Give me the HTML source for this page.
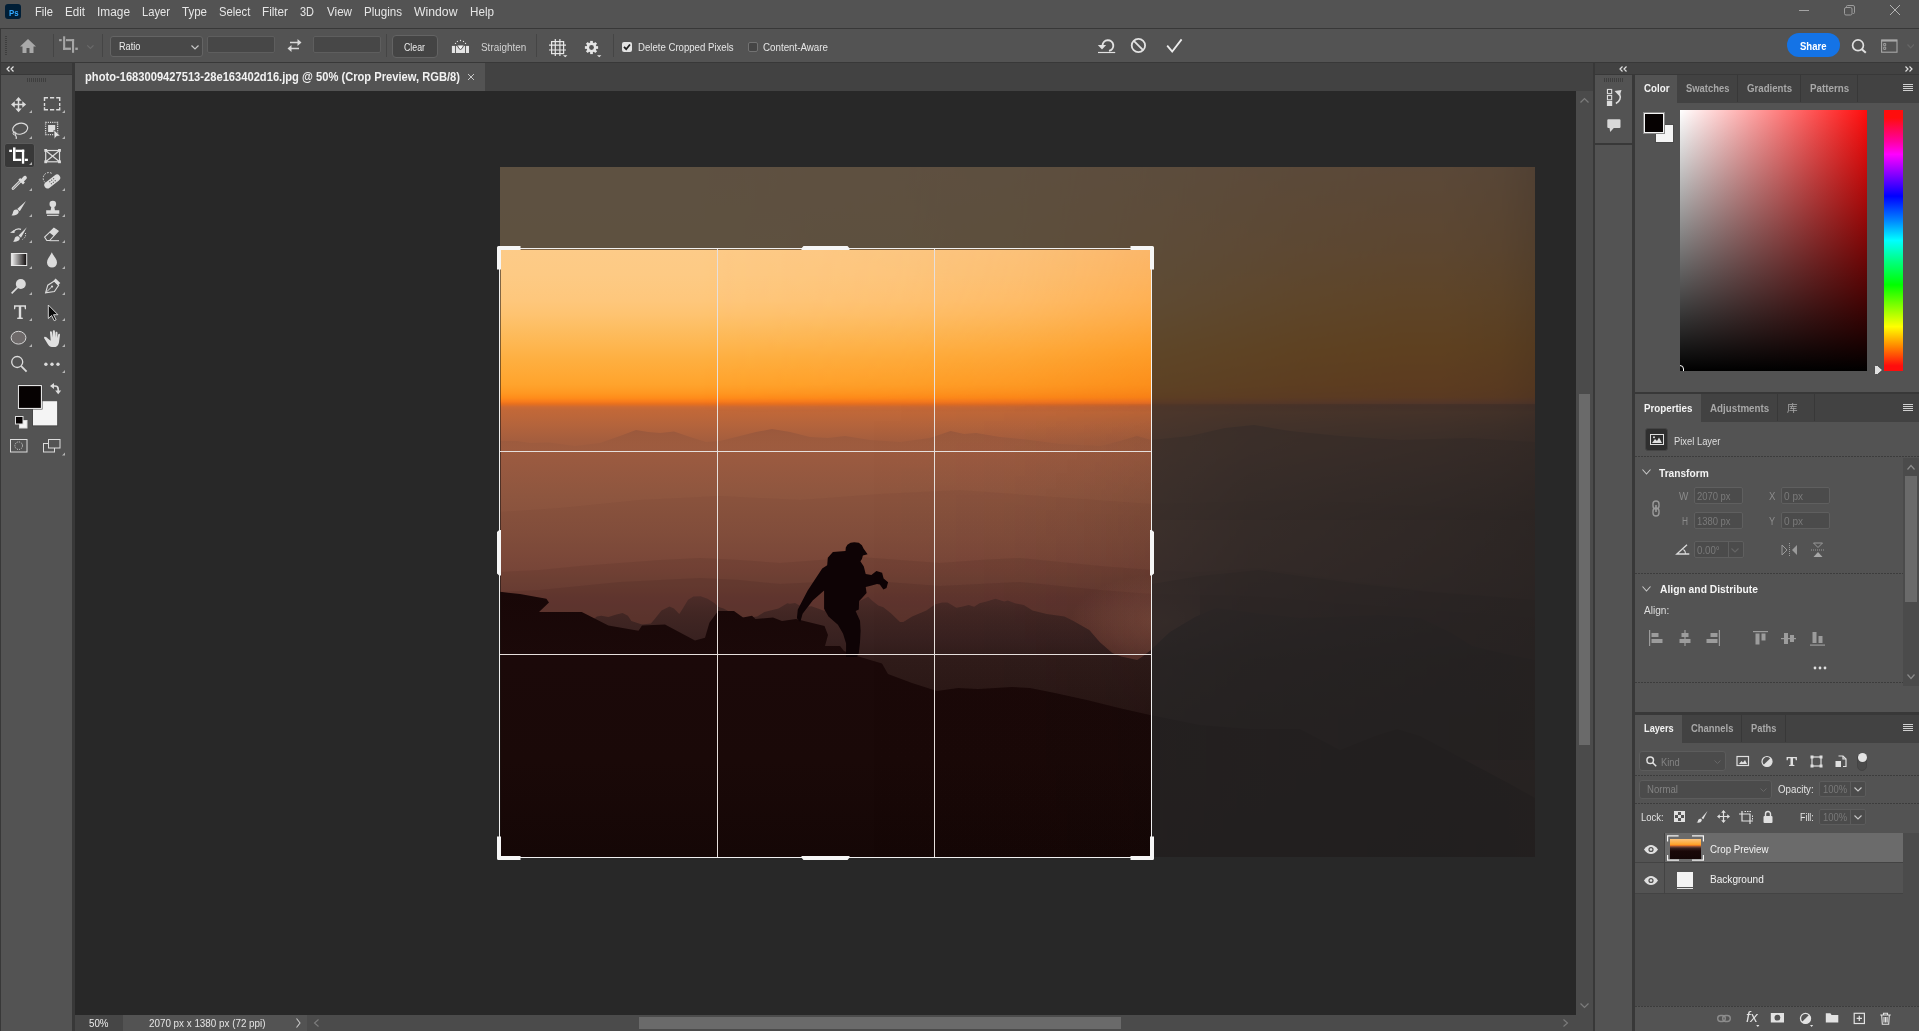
<!DOCTYPE html>
<html lang="en">
<head>
<meta charset="utf-8">
<title>photo-1683009427513-28e163402d16.jpg @ 50% (Crop Preview, RGB/8)</title>
<style>
*{box-sizing:border-box;margin:0;padding:0}
html,body{width:1919px;height:1031px;overflow:hidden;background:#383838}
body{position:relative;font-family:"Liberation Sans","Noto Sans CJK SC",sans-serif;font-size:10px;color:#dcdcdc}
.a{position:absolute}
.bg{background:#535353}
.dk{background:#424242}
.t{position:absolute;white-space:nowrap;line-height:14px;height:14px;transform-origin:0 50%}
.b{font-weight:bold}
.sep{position:absolute;width:1px;background:#454545}
.inp{position:absolute;background:#464646;border:1px solid #646464;border-radius:2px}
.dot{position:absolute;height:1px;background:repeating-linear-gradient(90deg,#3c3c3c 0 2px,#535353 2px 3px)}
svg{position:absolute;overflow:visible}
</style>
</head>
<body>
<!-- ===== Menu bar ===== -->
<div class="a bg menu" style="left:0;top:0;width:1919px;height:28px">
  <div class="a" style="left:5px;top:4px;width:16px;height:15px;background:#001e36;border-radius:3px"></div>
  <div class="t" style="left:8.5px;top:5.61px;font-size:9.5px;color:#31a8ff;font-weight:bold;transform:scaleX(0.8258)">Ps</div>
  <div class="t" style="left:35px;top:4.84px;font-size:12px;color:#e6e6e6;transform:scaleX(0.9305)">File</div>
  <div class="t" style="left:65px;top:4.84px;font-size:12px;color:#e6e6e6;transform:scaleX(0.9668)">Edit</div>
  <div class="t" style="left:97px;top:4.84px;font-size:12px;color:#e6e6e6;transform:scaleX(0.9892)">Image</div>
  <div class="t" style="left:142px;top:4.84px;font-size:12px;color:#e6e6e6;transform:scaleX(0.9324)">Layer</div>
  <div class="t" style="left:182px;top:4.84px;font-size:12px;color:#e6e6e6;transform:scaleX(0.9610)">Type</div>
  <div class="t" style="left:218.7px;top:4.84px;font-size:12px;color:#e6e6e6;transform:scaleX(0.9383)">Select</div>
  <div class="t" style="left:262px;top:4.84px;font-size:12px;color:#e6e6e6;transform:scaleX(0.9748)">Filter</div>
  <div class="t" style="left:300px;top:4.84px;font-size:12px;color:#e6e6e6;transform:scaleX(0.9124)">3D</div>
  <div class="t" style="left:327px;top:4.84px;font-size:12px;color:#e6e6e6;transform:scaleX(0.9691)">View</div>
  <div class="t" style="left:364px;top:4.84px;font-size:12px;color:#e6e6e6;transform:scaleX(0.9655)">Plugins</div>
  <div class="t" style="left:414px;top:4.84px;font-size:12px;color:#e6e6e6;transform:scaleX(1.0190)">Window</div>
  <div class="t" style="left:470px;top:4.84px;font-size:12px;color:#e6e6e6;transform:scaleX(0.9722)">Help</div>
  <!-- window controls -->
  <svg style="left:1798px;top:0" width="112" height="20" viewBox="1798 0 112 20" fill="none" stroke="#a4a4a4" stroke-width="1">
    <path d="M1799 10.500h10"/>
    <rect x="1844.500" y="7.500" width="7.500" height="7.500" rx="1.500" stroke="#9c9c9c"/><path d="M1846.500 7.300v-.8a1 1 0 0 1 1-1h5.500a1.500 1.500 0 0 1 1.500 1.500v5.500a1 1 0 0 1-1 1h-.8" stroke="#9c9c9c"/>
    <path d="M1890 5l10 10M1900 5l-10 10" stroke="#b4b4b4"/>
  </svg>
</div>
<!-- ===== Options bar ===== -->
<div class="a bg" style="left:1px;top:29px;width:1918px;height:33px"></div>
<div class="a" style="left:5px;top:36px;width:2px;height:19px;background:repeating-linear-gradient(180deg,#3e3e3e 0 1px,#535353 1px 2px)"></div>
<!-- home -->
<svg style="left:20px;top:39px" width="16" height="14" viewBox="0 0 16 14"><path d="M8 0L0 7.500h2.500V14h4V9h3v5h4V7.500H16z" fill="#a9a9a9"/></svg>
<div class="sep" style="left:53px;top:34px;height:23px"></div>
<!-- crop tool icon -->
<svg style="left:59px;top:36px" width="20" height="18" viewBox="59 36 20 18" fill="#a6a6a6"><rect x="63.100" y="36.300" width="2.100" height="13.600"/><rect x="63.100" y="47.600" width="7.800" height="2.300"/><rect x="75.300" y="47.600" width="2.500" height="2.300"/><rect x="59.100" y="39.100" width="2.600" height="2.100"/><rect x="66" y="39.100" width="8.100" height="2.100"/><rect x="72" y="39.100" width="2.100" height="13.700"/></svg>
<svg style="left:87px;top:45px" width="8" height="5" viewBox="0 0 8 5" fill="none" stroke="#6a6a6a" stroke-width="1.200"><path d="M.3.300l3.100 3.200L6.500.3"/></svg>
<div class="sep" style="left:102px;top:34px;height:23px"></div>
<!-- Ratio dropdown -->
<div class="inp" style="left:110px;top:36px;width:93px;height:21px;border-radius:3px;background:#484848"></div>
<div class="t" style="left:119px;top:40.43px;font-size:10px;color:#ececec;transform:scaleX(0.9097)">Ratio</div>
<svg style="left:191px;top:45px" width="8" height="5" viewBox="0 0 8 5" fill="none" stroke="#c8c8c8" stroke-width="1.200"><path d="M.5.5l3.500 3.500L7.500.5"/></svg>
<div class="inp" style="left:207px;top:36px;width:68px;height:17px;background:#474747;border-color:#5e5e5e"></div>
<!-- swap -->
<svg style="left:287px;top:39px" width="15" height="13" viewBox="0 0 15 13" fill="#d8d8d8"><path d="M3 2.700h7.500V0L14.500 3.500 10.500 7V4.300H3zM12 8.700H4.500V6L.5 9.500 4.500 13v-2.700H12z"/></svg>
<div class="inp" style="left:313px;top:36px;width:68px;height:17px;background:#474747;border-color:#5e5e5e"></div>
<div class="sep" style="left:386px;top:34px;height:23px"></div>
<!-- Clear -->
<div class="inp" style="left:392px;top:35px;width:46px;height:23px;border-radius:4px;background:#444444;border-color:#636363"></div>
<div class="t" style="left:403.75px;top:41.04px;font-size:10px;color:#ececec;transform:scaleX(0.8784)">Clear</div>
<!-- straighten -->
<svg style="left:451px;top:40px" width="19" height="14" viewBox="0 0 19 14" fill="#e4e4e4"><rect x=".9" y="5.900" width="3.100" height="7.100"/><rect x="14.900" y="5.900" width="3.100" height="7.100"/><rect x="4.900" y="5.900" width="9.100" height="7.100"/><path d="M6.300 5.500Q9.500 13.500 12.700 5.500" fill="#f4f4f4" stroke="#535353" stroke-width="1"/><circle cx="4.500" cy="3.400" r=".65"/><circle cx="6.400" cy="1.400" r=".65"/><circle cx="9.500" cy=".5" r=".65"/><circle cx="12.500" cy="1.400" r=".65"/><circle cx="14.500" cy="3.400" r=".65"/></svg>
<div class="t" style="left:481px;top:41.04px;font-size:10px;color:#d2d2d2;transform:scaleX(0.9925)">Straighten</div>
<div class="sep" style="left:536px;top:34px;height:23px"></div>
<!-- grid -->
<svg style="left:549px;top:39px" width="19" height="19" viewBox="549 39 19 19" fill="none" stroke="#e6e6e6" stroke-width="1.200"><rect x="551.600" y="41.600" width="12" height="12"/><path d="M555.300 39v17M559.900 39v17M549 45.200h17M549 50h17"/><path d="M563 55.200h4.400l-2.200 2z" fill="#e6e6e6" stroke="none"/></svg>
<!-- gear -->
<svg style="left:584px;top:40px" width="18" height="18" viewBox="584 40 18 18"><g transform="translate(591.500 47.500)" fill="#e4e4e4"><circle r="4.900"/><rect x="-1.350" y="-6.600" width="2.700" height="13.200"/><rect x="-1.350" y="-6.600" width="2.700" height="13.200" transform="rotate(45)"/><rect x="-1.350" y="-6.600" width="2.700" height="13.200" transform="rotate(90)"/><rect x="-1.350" y="-6.600" width="2.700" height="13.200" transform="rotate(135)"/><circle r="2.400" fill="#535353"/></g><path d="M597 55.200h4.400l-2.200 2z" fill="#e4e4e4"/></svg>
<div class="sep" style="left:613px;top:34px;height:23px"></div>
<!-- checkboxes -->
<div class="a" style="left:622px;top:42px;width:10px;height:10px;border-radius:2px;background:#e2e2e2"></div>
<svg style="left:623px;top:43px" width="8" height="8" viewBox="0 0 8 8" fill="none" stroke="#1e1e1e" stroke-width="1.800"><path d="M1 3.800l2.200 2.400L7 1.500"/></svg>
<div class="t" style="left:637.5px;top:41.04px;font-size:10px;color:#e6e6e6;transform:scaleX(0.9608)">Delete Cropped Pixels</div>
<div class="a" style="left:748px;top:42px;width:10px;height:10px;border-radius:2px;background:#454545;border:1px solid #727272"></div>
<div class="t" style="left:763.1px;top:41.04px;font-size:10px;color:#e6e6e6;transform:scaleX(0.9770)">Content-Aware</div>
<!-- reset / cancel / commit -->
<svg style="left:1097px;top:38px" width="19" height="16" viewBox="1097 38 19 16" fill="none" stroke="#e2e2e2"><path d="M1098 52.500h17.200" stroke-width="1.200"/><path d="M1102.500 45.500a5.400 5.400 0 1 1 6.500 5.400" stroke-width="1.900"/><path d="M1097.800 45h8.400l-4.200 4.600z" fill="#e2e2e2" stroke="none"/></svg>
<svg style="left:1130px;top:37px" width="17" height="17" viewBox="1130 37 17 17" fill="none" stroke="#e2e2e2" stroke-width="1.800"><circle cx="1138.400" cy="45.500" r="6.700"/><path d="M1133.800 40.800l9.300 9.400"/></svg>
<svg style="left:1166px;top:38px" width="18" height="15" viewBox="1166 38 18 15" fill="none" stroke="#ececec" stroke-width="1.800"><path d="M1167.200 45.600l5 6L1181.600 39.400"/></svg>
<!-- Share -->
<div class="a" style="left:1787px;top:33px;width:53px;height:24px;border-radius:12px;background:#1473e6"></div>
<div class="t" style="left:1799.9px;top:39.54px;font-size:10px;color:#ffffff;font-weight:bold;transform:scaleX(0.9533)">Share</div>
<svg style="left:1851px;top:38px" width="16" height="16" viewBox="1851 38 16 16" fill="none" stroke="#e0e0e0" stroke-width="1.700"><circle cx="1858" cy="45.300" r="5.400"/><path d="M1861.800 49.200l4 3.600" stroke-width="2"/></svg>
<svg style="left:1881px;top:39px" width="17" height="14" viewBox="0 0 17 14" fill="none" stroke="#a8a8a8" stroke-width="1.100"><rect x=".6" y="1" width="15.400" height="12.200"/><path d="M.6 1.700h15.400" stroke-width="1.800"/><path d="M2.700 4.500h2v2.200h-2zM2.700 8.200h2v2.200h-2z" stroke-width=".9"/></svg>
<svg style="left:1907px;top:44px" width="8" height="5" viewBox="0 0 8 5" fill="none" stroke="#666" stroke-width="1.200"><path d="M.5.5l3.200 3.300L6.900.5"/></svg>
<!-- ===== Toolbar ===== -->
<div class="a dk" style="left:1px;top:63px;width:71px;height:11px"></div>
<svg style="left:6px;top:66px" width="8" height="6" viewBox="0 0 8 6" fill="none" stroke="#e6e6e6" stroke-width="1.200"><path d="M3.500.5L1 3l2.500 2.500M7.500.5L5 3l2.500 2.500"/></svg>
<div class="a bg" style="left:1px;top:75px;width:71px;height:956px"></div>
<div class="a" style="left:27px;top:78px;width:20px;height:4px;background:repeating-linear-gradient(90deg,#3e3e3e 0 1px,#535353 1px 2px)"></div>
<!-- selected tool bg -->
<div class="a" style="left:4px;top:143px;width:31px;height:25px;background:#383838;border:1px solid #5a5a5a;border-radius:3px"></div>
<svg style="left:0;top:90px" width="73" height="370" viewBox="0 90 73 370" fill="none" stroke="#dcdcdc" stroke-width="1.300">
  <!-- corner flyout triangles -->
  <g fill="#b4b4b4" stroke="none">
    <path d="M32 110v3h-3zM65 110v3h-3zM32 136v3h-3zM65 136v3h-3zM32 162v3h-3zM32 188v3h-3zM65 188v3h-3zM32 214v3h-3zM65 214v3h-3zM32 240v3h-3zM65 240v3h-3zM32 266v3h-3zM65 266v3h-3zM32 292v3h-3zM65 292v3h-3zM32 318v3h-3zM65 318v3h-3zM32 344v3h-3zM65 344v3h-3zM65 370v3h-3zM65 452.500v3h-3z"/>
  </g>
  <!-- move -->
  <path d="M18.500 99v11M13 104.500h11" stroke-width="1.500"/>
  <path d="M18.500 97l3.200 3.800h-6.400zM18.500 112.200l3.200-3.800h-6.400zM11 104.500l3.800-3.200v6.400zM26.100 104.500l-3.800-3.200v6.400z" fill="#dcdcdc" stroke="none"/>
  <!-- marquee -->
  <path d="M44.500 101v-3.200h3.500M50 97.800h4.200M56.200 97.800h3.500v3.200M59.700 103v3M59.700 107.200v2.500h-3.500M54.200 109.700h-4.200M48 109.700h-3.500v-2.500M44.500 106v-3" stroke-width="1.400"/>
  <!-- lasso -->
  <ellipse cx="20.200" cy="128.700" rx="7.600" ry="5.400" transform="rotate(-12 20.200 128.700)" stroke-width="1.200"/>
  <circle cx="14.600" cy="133.400" r="1.500" stroke-width="1"/><path d="M15.300 134.800c1 1.200 1.200 2.600.9 4.200" stroke-width="1.100"/>
  <!-- object select -->
  <rect x="45.600" y="122.400" width="12" height="12.200" stroke-dasharray="1.100 1.100" stroke-width="1.300"/>
  <path d="M48.100 125h7.100v5.500h-1.500v1.400h-5.600z" fill="#dcdcdc" stroke="none"/>
  <path d="M54 130l.3 9 2.200-2.700 3.600-.6z" fill="#e4e4e4" stroke="#535353" stroke-width=".5"/>
  <!-- crop (selected) -->
  <g fill="#ffffff" stroke="none"><rect x="13" y="147.400" width="2.500" height="13.600"/><rect x="13" y="158.700" width="8.300" height="2.300"/><rect x="24.800" y="158.700" width="3.100" height="2.300"/><rect x="9.200" y="149.700" width="2.800" height="2.300"/><rect x="15.500" y="149.700" width="8.700" height="2.300"/><rect x="21.900" y="149.700" width="2.300" height="14"/></g>
  <!-- frame -->
  <g stroke-width="1.200"><rect x="45.700" y="150.500" width="13.800" height="11.300"/><path d="M45.700 150.500l13.800 11.300M59.500 150.500l-13.800 11.300"/></g>
  <g fill="#dcdcdc" stroke="none"><rect x="44.300" y="149" width="2.800" height="2.800"/><rect x="58.100" y="149" width="2.800" height="2.800"/><rect x="44.300" y="160.400" width="2.800" height="2.800"/><rect x="58.100" y="160.400" width="2.800" height="2.800"/></g>
  <!-- eyedropper -->
  <path d="M20.200 180.200l-7.800 7.800c-.8.800.4 2 1.200 1.200l7.800-7.800" stroke-width="1.100"/>
  <path d="M18.300 179.800l1.900-1.900 1 1 2.300-2.500c1.800-1.900 4.600.9 2.800 2.700l-2.400 2.400 1 1-1.900 1.900z" fill="#dcdcdc" stroke="none"/>
  <!-- healing -->
  <g transform="rotate(-38 52.200 181.400)"><rect x="43" y="178.200" width="18.400" height="6.600" rx="3.300" fill="#dcdcdc" stroke="none"/><g fill="#535353" stroke="none"><rect x="49.600" y="179.600" width="1.100" height="1.100"/><rect x="52" y="179.600" width="1.100" height="1.100"/><rect x="54.400" y="179.600" width="1.100" height="1.100"/><rect x="49.600" y="182.200" width="1.100" height="1.100"/><rect x="52" y="182.200" width="1.100" height="1.100"/><rect x="54.400" y="182.200" width="1.100" height="1.100"/></g></g>
  <path d="M45.200 182.500a5 5 0 0 1 7.300-8.600" stroke-dasharray="1.600 1.300" stroke-width="1"/>
  <!-- brush -->
  <path d="M26 201l-8.800 7.900 2.600 2.400z" fill="#dcdcdc" stroke="none"/><path d="M16.600 209.500c-2.300-.2-3.300 1.300-3.600 2.700-.3 1.400-.6 2.300-1.600 3 2.600.6 5.800.1 7-2.100.6-1.200.2-2.400-.4-2.800z" fill="#dcdcdc" stroke="none"/>
  <!-- stamp -->
  <g fill="#dcdcdc" stroke="none"><circle cx="52.800" cy="204" r="3.300"/><path d="M51.300 206.500h3l.6 3.800h4.400v3.500H46.200v-3.500h4.500z"/><rect x="47" y="214.800" width="11.600" height="1.100"/></g>
  <!-- history brush -->
  <path d="M26.800 227.300l-8.200 8.200 2.400 2.200z" fill="#dcdcdc" stroke="none"/><path d="M18 236.200c-2.100-.2-3.100 1.200-3.400 2.500-.3 1.300-.6 2.100-1.600 2.700 2.400.6 5.400.1 6.500-1.900.6-1.100.2-2.200-.4-2.600z" fill="#dcdcdc" stroke="none"/>
  <path d="M13.500 231.600c1.800-2.300 5-3 7.500-2.300" stroke-width="1.200"/><path d="M10 232.800l4.300-3.100.3 3.400z" fill="#dcdcdc" stroke="none"/>
  <path d="M25.400 233c.9 2.300-.3 5-2.900 6.400" stroke-dasharray="1 1.300" stroke-width="1"/>
  <!-- eraser -->
  <path d="M53.900 228.100l4.300 3.100-8.600 9.300h-2.800l-2.200-3.500z" stroke-width="1.100"/><path d="M53.900 228.100l4.300 3.100-4.400 4.800-4.400-3.400z" fill="#dcdcdc" stroke="none"/><path d="M49.600 240.700h9.400" stroke-width="1"/>
  <!-- gradient -->
  <defs><linearGradient id="tg" x1="0" x2="1" y1="0" y2="0"><stop offset="0" stop-color="#f4f4f4"/><stop offset="1" stop-color="#0c0808"/></linearGradient></defs>
  <rect x="11.400" y="253.500" width="15.300" height="12" fill="url(#tg)" stroke="#e8e8e8" stroke-width="1"/>
  <!-- blur drop -->
  <path d="M51.800 252.200c1.600 3.700 5.200 6.700 5.200 10.400a5 5 0 0 1-10 0c0-3.700 3.200-6.700 4.800-10.400z" fill="#dcdcdc" stroke="none"/>
  <!-- dodge -->
  <circle cx="20.800" cy="284" r="5" fill="#dcdcdc" stroke="none"/><path d="M17.600 287.400l-6 6" stroke-width="1.600"/>
  <!-- pen -->
  <path d="M45.600 292.800l2.200-7.600 6.500-4.200 4.300 4.400-4.200 6.200z" stroke-width="1.100"/><path d="M45.800 292.600l5.600-5.400" stroke-width="1"/><circle cx="52" cy="286.600" r="1.100" fill="#dcdcdc" stroke="none"/><path d="M53.600 280.800l2-2.300 4.700 4.600-2.200 2.100z" fill="#dcdcdc" stroke="none"/>
  <!-- Type -->
  <path d="M14 309.200v-4h12v4h-1.100l-.5-2.400h-3.200v10.600l1.600.4v1.200h-5.600v-1.200l1.600-.4v-10.600h-3.200l-.5 2.400z" fill="#dcdcdc" stroke="none"/>
  <!-- path select arrow -->
  <path d="M48.300 305v13.500l3.300-3 2.600 5.200 1.900-.9-2.600-5.100h4.400z" fill="#0c0c0c" stroke="#e0e0e0" stroke-width=".9"/>
  <!-- ellipse -->
  <ellipse cx="18.500" cy="337.700" rx="7.400" ry="6.400" fill="#6e6a6a" stroke="#d6d6d6" stroke-width="1"/>
  <!-- hand -->
  <path d="M47.800 338.600c-1.200-1.400-2.700-2.200-3.500-1.500-.7.700.2 1.900 1.300 3.300 1.700 2.300 2.800 6.500 6.300 6.500h2.600c3.100 0 4.300-2.600 4.600-5.500l.9-6.600c.2-1.400-1.500-1.600-1.800-.3l-.8 3.600.1-5.300c0-1.500-2-1.500-2 0l-.2 4.600-.4-6.100c-.1-1.500-2.100-1.400-2.100.1l.1 6-.9-5.200c-.3-1.400-2.200-1.100-2 .3l.7 8.300z" fill="#e0e0e0" stroke="none"/>
  <!-- zoom -->
  <circle cx="17.200" cy="362" r="5.500" stroke-width="1.300"/><path d="M21.200 366.200l5.400 5.400" stroke-width="1.800"/>
  <!-- dots -->
  <g fill="#dcdcdc" stroke="none"><circle cx="45.900" cy="364.200" r="1.700"/><circle cx="52" cy="364.200" r="1.700"/><circle cx="58" cy="364.200" r="1.700"/></g>
  <!-- swap arrows -->
  <path d="M53.500 386h1.500a3.200 3.200 0 0 1 3.200 3.200v1.800" stroke-width="1.700"/><path d="M50 386l4-2.900v5.800zM58.200 394.300l-3-3.900h6z" fill="#dcdcdc" stroke="none"/>
  <!-- bg / fg swatches -->
  <rect x="32.500" y="400.700" width="25.200" height="25.200" fill="#f4f4f4" stroke="#484848" stroke-width="1"/>
  <rect x="17.300" y="384.500" width="25.200" height="25" fill="#484848" stroke="none"/>
  <rect x="17.900" y="385.100" width="24" height="23.800" fill="#f6f6f6" stroke="none"/>
  <rect x="18.900" y="386.100" width="22" height="21.800" fill="#060202" stroke="none"/>
  <!-- default colors -->
  <rect x="19.500" y="420.500" width="7.500" height="7.500" fill="#f4f4f4" stroke="#dcdcdc" stroke-width="1"/><rect x="15.500" y="416.500" width="7.500" height="7.500" fill="#060202" stroke="#dcdcdc" stroke-width="1"/>
  <!-- quick mask -->
  <rect x="10.500" y="439.500" width="16.500" height="12.500" stroke-width="1"/><circle cx="18.700" cy="445.700" r="3.800" stroke-dasharray="1 1.200" stroke-width="1"/>
  <!-- screen mode -->
  <rect x="43.500" y="443.500" width="11" height="8.500" stroke-width="1"/><rect x="48.500" y="439.500" width="11.500" height="8.500" fill="#535353" stroke-width="1"/>
</svg>
<!-- ===== Document area ===== -->
<div class="a dk" style="left:75px;top:63px;width:1518px;height:28px"></div>
<div class="a bg" style="left:75px;top:63px;width:410px;height:28px"></div>
<div class="t" style="left:84.8px;top:69.84px;font-size:12px;color:#f2f2f2;font-weight:bold;transform:scaleX(0.9295)">photo-1683009427513-28e163402d16.jpg @ 50% (Crop Preview, RGB/8)</div>
<svg style="left:468px;top:74px" width="6" height="6" viewBox="0 0 6 6" fill="none" stroke="#c8c8c8" stroke-width="1"><path d="M0 0l6 6M6 0L0 6"/></svg>
<div class="a" style="left:75px;top:91px;width:1501px;height:924px;background:#282828"></div>
<!--PHOTO-->
<!-- vertical scrollbar -->
<div class="a" style="left:1576px;top:91px;width:17px;height:924px;background:#4b4b4b"></div>
<div class="a" style="left:1579px;top:394px;width:11px;height:351px;background:#6a6a6a"></div>
<svg style="left:1580px;top:98px" width="9" height="5" viewBox="0 0 9 5" fill="none" stroke="#7c7c7c" stroke-width="1.200"><path d="M.5 4.500l4-4 4 4"/></svg>
<svg style="left:1580px;top:1003px" width="9" height="5" viewBox="0 0 9 5" fill="none" stroke="#7c7c7c" stroke-width="1.200"><path d="M.5.5l4 4 4-4"/></svg>
<!-- status bar -->
<div class="a" style="left:75px;top:1015px;width:1518px;height:16px;background:#4b4b4b"></div>
<div class="a" style="left:75px;top:1015px;width:48px;height:16px;background:#464646"></div>
<div class="a bg" style="left:123px;top:1015px;width:184px;height:16px"></div>
<div class="t" style="left:89.25px;top:1017.43px;font-size:10px;color:#ececec;transform:scaleX(0.9742)">50%</div>
<div class="t" style="left:149.25px;top:1017.43px;font-size:10px;color:#e6e6e6;transform:scaleX(0.9838)">2070 px x 1380 px (72 ppi)</div>
<svg style="left:296px;top:1018px" width="5" height="10" viewBox="0 0 5 10" fill="none" stroke="#c8c8c8" stroke-width="1.100"><path d="M.5.5l3.500 4.500L.5 9.500"/></svg>
<svg style="left:314px;top:1019px" width="5" height="8" viewBox="0 0 5 8" fill="none" stroke="#7c7c7c" stroke-width="1.100"><path d="M4.500.5l-4 3.500 4 3.500"/></svg>
<svg style="left:1563px;top:1019px" width="5" height="8" viewBox="0 0 5 8" fill="none" stroke="#7c7c7c" stroke-width="1.100"><path d="M.5.5l4 3.500-4 3.500"/></svg>
<div class="a" style="left:639px;top:1017px;width:482px;height:12px;background:#6a6a6a"></div>
<!-- photo (1035x690 at 500,167) -->
<svg style="left:500px;top:167px;overflow:hidden" width="1035" height="690" viewBox="0 0 1035 690">
<defs>
<linearGradient id="skyL" x1="0" y1="0" x2="0" y2="690" gradientUnits="userSpaceOnUse"><stop offset="0.0000" stop-color="#ffc98c"/><stop offset="0.1188" stop-color="#fdcb88"/><stop offset="0.1565" stop-color="#fdca84"/><stop offset="0.1928" stop-color="#fec77c"/><stop offset="0.2145" stop-color="#fec370"/><stop offset="0.2362" stop-color="#fdbd60"/><stop offset="0.2580" stop-color="#feb650"/><stop offset="0.2797" stop-color="#feaf40"/><stop offset="0.3014" stop-color="#ffa834"/><stop offset="0.3159" stop-color="#ffa32c"/><stop offset="0.3275" stop-color="#ff9822"/><stop offset="0.3348" stop-color="#ff8c1a"/><stop offset="0.3399" stop-color="#f87c1c"/><stop offset="0.3435" stop-color="#e8701e"/><stop offset="0.3478" stop-color="#cc6a34"/><stop offset="0.3522" stop-color="#c26838"/><stop offset="0.3739" stop-color="#b4643c"/><stop offset="0.3957" stop-color="#a55e3e"/><stop offset="0.4246" stop-color="#9a5a40"/><stop offset="0.4768" stop-color="#8e563f"/><stop offset="0.5319" stop-color="#85503d"/><stop offset="0.5855" stop-color="#7a483a"/><stop offset="0.6232" stop-color="#6e4036"/><stop offset="0.6855" stop-color="#603830"/><stop offset="0.7725" stop-color="#4e2c28"/><stop offset="1.0000" stop-color="#301a18"/></linearGradient>
<linearGradient id="skyR" x1="0" y1="0" x2="0" y2="690" gradientUnits="userSpaceOnUse"><stop offset="0.0000" stop-color="#f0a868"/><stop offset="0.0623" stop-color="#f4a458"/><stop offset="0.1203" stop-color="#f8a048"/><stop offset="0.1928" stop-color="#ff9828"/><stop offset="0.2652" stop-color="#ff8808"/><stop offset="0.3159" stop-color="#f87808"/><stop offset="0.3333" stop-color="#f07010"/><stop offset="0.3406" stop-color="#d86428"/><stop offset="0.3464" stop-color="#b45a34"/><stop offset="0.3551" stop-color="#a05234" stop-opacity="0"/></linearGradient>
<linearGradient id="mR" x1="0" y1="0" x2="1035" y2="0" gradientUnits="userSpaceOnUse"><stop offset="0.0000" stop-color="#000" stop-opacity="1"/><stop offset="0.1932" stop-color="#000" stop-opacity="1"/><stop offset="0.3865" stop-color="#1c1c1c" stop-opacity="1"/><stop offset="0.5024" stop-color="#3c3c3c" stop-opacity="1"/><stop offset="0.6290" stop-color="#787878" stop-opacity="1"/><stop offset="0.7729" stop-color="#dcdcdc" stop-opacity="1"/><stop offset="0.8696" stop-color="#fff" stop-opacity="1"/><stop offset="1.0000" stop-color="#fff" stop-opacity="1"/></linearGradient>
<mask id="mkR" maskUnits="userSpaceOnUse" x="0" y="0" width="1035" height="690"><rect width="1035" height="690" fill="url(#mR)"/></mask>
<linearGradient id="dkR" x1="0" y1="0" x2="1035" y2="0" gradientUnits="userSpaceOnUse"><stop offset="0.0000" stop-color="#0a0404" stop-opacity="0"/><stop offset="0.3478" stop-color="#0a0404" stop-opacity="0"/><stop offset="0.4831" stop-color="#0a0404" stop-opacity="0.02"/><stop offset="0.5604" stop-color="#0a0404" stop-opacity="0.05"/><stop offset="0.6290" stop-color="#0a0404" stop-opacity="0.1"/><stop offset="0.7246" stop-color="#0a0404" stop-opacity="0.32"/><stop offset="0.8696" stop-color="#0a0404" stop-opacity="0.46"/><stop offset="1.0000" stop-color="#0a0404" stop-opacity="0.58"/></linearGradient>
<linearGradient id="mV" x1="0" y1="0" x2="0" y2="690" gradientUnits="userSpaceOnUse"><stop offset="0.3435" stop-color="#555" stop-opacity="1"/><stop offset="0.3739" stop-color="#8a8a8a" stop-opacity="1"/><stop offset="0.5116" stop-color="#fff" stop-opacity="1"/><stop offset="1.0000" stop-color="#fff" stop-opacity="1"/></linearGradient>
<mask id="mkV" maskUnits="userSpaceOnUse" x="0" y="0" width="1035" height="690"><rect width="1035" height="690" fill="url(#mV)"/></mask>
<linearGradient id="vig" x1="0" y1="0" x2="1035" y2="0" gradientUnits="userSpaceOnUse"><stop offset="0.0000" stop-color="#301008" stop-opacity="0"/><stop offset="0.9082" stop-color="#301008" stop-opacity="0"/><stop offset="0.9662" stop-color="#301008" stop-opacity="0.07"/><stop offset="1.0000" stop-color="#301008" stop-opacity="0.2"/></linearGradient>
<linearGradient id="far" x1="0" y1="0" x2="0" y2="690" gradientUnits="userSpaceOnUse"><stop offset="0.3783" stop-color="#96563c" stop-opacity="0.85"/><stop offset="0.4029" stop-color="#9a5a3e" stop-opacity="0.6"/><stop offset="0.4333" stop-color="#9a5a40" stop-opacity="0"/></linearGradient>
<linearGradient id="mid" x1="0" y1="0" x2="0" y2="690" gradientUnits="userSpaceOnUse"><stop offset="0.6217" stop-color="#4c2c28"/><stop offset="0.6493" stop-color="#412623"/><stop offset="0.6855" stop-color="#382120"/><stop offset="0.7145" stop-color="#301c1a"/><stop offset="0.8014" stop-color="#281614"/></linearGradient>
<linearGradient id="midL" x1="0" y1="0" x2="0" y2="690" gradientUnits="userSpaceOnUse"><stop offset="0.6217" stop-color="#502f2b"/><stop offset="0.6855" stop-color="#3c2220"/></linearGradient>
<linearGradient id="fg" x1="0" y1="0" x2="0" y2="690" gradientUnits="userSpaceOnUse"><stop offset="0.6130" stop-color="#180707"/><stop offset="0.7145" stop-color="#1b0909"/><stop offset="0.8594" stop-color="#1a0908"/><stop offset="1.0000" stop-color="#150706"/></linearGradient>
<linearGradient id="hz1" x1="0" y1="0" x2="0" y2="690" gradientUnits="userSpaceOnUse"><stop offset="0.5406" stop-color="#6e4236" stop-opacity="0"/><stop offset="0.5913" stop-color="#6a3e34" stop-opacity="0.28"/><stop offset="0.6855" stop-color="#6a3e34" stop-opacity="0"/></linearGradient>
<radialGradient id="fog" cx="665.0" cy="455.0" r="1" gradientUnits="userSpaceOnUse" gradientTransform="translate(665.0 455.0) scale(95 48) translate(-665.0 -455.0)"><stop offset="0" stop-color="#a86a54" stop-opacity=".42"/><stop offset=".6" stop-color="#a86a54" stop-opacity=".2"/><stop offset="1" stop-color="#a86a54" stop-opacity="0"/></radialGradient>
</defs>
<rect width="1035" height="690" fill="url(#skyL)"/>
<rect width="1035" height="246" fill="url(#skyR)" mask="url(#mkR)"/>
<path d="M0.0 274.0 17.0 274.0 30.0 276.0 49.0 275.5 75.0 279.0 100.0 276.0 120.0 269.0 136.0 263.0 148.0 265.0 160.0 266.0 174.0 264.6 190.0 270.0 206.0 275.0 220.0 274.0 240.0 269.0 256.0 265.0 272.0 262.0 290.0 265.0 310.0 270.0 328.0 271.0 345.0 269.0 370.0 273.0 400.0 275.0 430.0 271.0 450.6 264.0 464.0 267.0 476.0 266.0 500.0 270.0 530.0 273.0 560.0 277.0 600.0 279.0 620.0 274.0 637.0 269.0 651.0 273.0 690.0 269.0 725.0 261.0 754.0 258.0 790.0 264.0 840.0 269.0 900.0 273.0 970.0 271.0 1035.0 275.0 1035.0 303.0 0.0 303.0z" fill="url(#far)"/>
<path d="M0.0 345.0 60.0 341.0 140.0 333.0 220.0 329.0 300.0 333.0 380.0 327.0 460.0 323.0 540.0 329.0 651.0 337.0 800.0 333.0 1035.0 345.0 1035.0 553.0 0.0 553.0z" fill="#5a3028" fill-opacity=".07"/>
<path d="M0.0 405.0 40.0 403.0 80.0 399.0 120.0 396.0 160.0 393.0 200.0 391.0 240.0 393.0 280.0 396.0 320.0 393.0 360.0 390.0 400.0 393.0 440.0 396.0 480.0 393.0 520.0 391.0 560.0 395.0 600.0 399.0 651.0 403.0 700.0 405.0 759.0 401.0 830.0 411.0 920.0 423.0 1035.0 433.0 1035.0 553.0 0.0 553.0z" fill="#4a2620" fill-opacity=".15"/>
<path d="M0.0 425.0 40.0 423.0 80.0 419.0 120.0 415.0 160.0 413.0 200.0 411.0 240.0 413.0 280.0 417.0 320.0 415.0 360.0 413.0 400.0 416.0 440.0 419.0 480.0 417.0 520.0 415.0 560.0 419.0 600.0 423.0 651.0 427.0 750.0 429.0 850.0 437.0 1035.0 451.0 1035.0 553.0 0.0 553.0z" fill="#40201c" fill-opacity=".16"/>
<rect x="540" y="400" width="160" height="110" fill="url(#fog)"/>
<path d="M652.0 273.0 690.0 269.0 725.0 261.0 754.0 258.0 790.0 264.0 840.0 269.0 900.0 273.0 970.0 271.0 1035.0 275.0 1035.0 353.0 652.0 353.0z" fill="#2a1410" fill-opacity=".14"/>
<path d="M652.0 417.0 700.0 409.0 759.0 403.0 800.0 409.0 860.0 417.0 930.0 425.0 1035.0 433.0 1035.0 533.0 652.0 533.0z" fill="#1e0e0c" fill-opacity=".22"/>
<path d="M90.0 455.0 96.9 449.6 101.3 448.7 108.4 450.1 115.5 447.8 122.6 446.0 127.9 448.7 131.4 454.0 136.7 455.8 142.0 457.5 150.9 456.6 154.5 452.2 161.5 443.4 169.5 439.5 174.0 441.6 179.3 446.9 182.8 441.6 188.1 432.7 193.4 429.5 200.5 429.2 207.6 431.8 214.7 436.3 218.2 439.8 223.6 441.6 230.0 445.0 245.0 451.0 257.2 449.6 264.3 445.1 278.5 441.6 287.3 436.3 290.0 436.7 295.0 436.1 302.6 439.9 311.4 439.3 318.0 441.5 324.0 443.7 340.0 437.0 352.0 433.0 360.6 433.6 368.2 429.8 372.0 433.6 378.3 438.6 383.4 440.2 390.9 446.2 400.0 455.0 403.3 454.9 412.1 449.6 426.3 443.4 435.2 437.2 442.3 435.4 447.6 435.4 456.4 440.7 461.7 439.8 468.8 438.0 474.1 439.8 479.5 436.3 486.5 434.5 495.4 431.8 504.3 434.5 507.8 433.6 514.9 436.3 523.8 438.0 532.6 443.4 546.8 446.9 564.5 449.6 573.4 454.0 589.3 462.9 599.9 475.3 612.3 485.9 621.2 489.4 637.2 493.0 642.5 489.4 649.6 484.1 670.0 465.0 695.0 450.0 716.0 441.0 740.0 444.0 762.0 447.0 800.0 451.0 830.0 450.0 880.0 448.0 920.0 451.0 950.0 465.0 972.0 479.0 1010.0 488.0 1035.0 493.0 1035.0 593.0 90.0 593.0z" fill="url(#mid)"/>
<path d="M0.0 424.8 20.0 427.0 46.4 431.8 49.0 435.4 39.0 445.0 81.8 445.0 108.4 458.4 138.5 463.7 142.0 458.4 165.0 457.5 195.0 473.5 205.0 470.8 209.4 455.8 218.0 444.0 234.0 444.0 243.0 450.5 252.0 448.7 255.5 452.0 273.0 450.5 282.0 454.0 296.0 452.0 324.5 459.0 328.0 468.0 325.0 479.0 340.0 479.0 344.0 484.0 357.0 489.0 382.0 496.5 388.0 507.0 412.0 516.0 437.0 524.0 458.0 521.0 478.0 522.0 512.0 520.0 530.0 521.0 555.0 526.0 587.0 533.0 619.0 541.0 650.0 548.0 700.0 558.0 750.0 562.0 800.0 562.0 840.0 583.0 875.0 569.0 897.0 562.0 920.0 569.0 950.0 585.0 980.0 601.0 1010.0 617.0 1035.0 631.0 1035.0 690.0 0.0 690.0z" fill="url(#fg)"/>
<path d="M327.8 390.7 332.9 385.0 345.5 384.1 345.8 380.6 347.4 377.8 350.6 375.8 354.3 375.2 358.8 375.8 361.9 378.3 363.5 381.6 367.6 387.2 362.9 388.4 361.9 392.0 360.4 394.2 363.8 399.5 365.7 407.1 371.4 408.1 376.4 404.0 382.1 405.8 383.6 411.5 388.1 415.3 386.5 421.0 383.4 422.5 379.8 417.5 377.0 416.9 370.7 418.7 365.7 420.0 366.6 426.0 360.9 432.3 359.1 433.9 358.8 442.4 355.6 443.9 360.0 453.8 360.6 463.9 360.0 475.2 358.8 486.0 356.9 490.1 346.1 490.1 346.1 476.5 343.0 466.4 337.9 457.8 328.5 449.4 324.1 441.8 324.1 423.5 312.7 433.6 302.6 446.8 300.3 455.0 296.9 451.3 297.8 442.4 307.7 423.5 322.2 401.4 327.2 398.3z" fill="#0e0305"/>
<rect y="237" width="1035" height="453" fill="url(#dkR)" mask="url(#mkV)"/>
<rect width="1035" height="690" fill="url(#vig)"/>
</svg>
<!-- crop shield -->
<div class="a" style="left:500px;top:167px;width:1035px;height:81px;background:rgba(40,40,40,.75)"></div>
<div class="a" style="left:1152px;top:248px;width:383px;height:609px;background:rgba(40,40,40,.75)"></div>
<!-- crop box -->
<svg style="left:490px;top:240px" width="672" height="626" viewBox="490 240 672 626" fill="none" stroke="#ededed" stroke-width="1" shape-rendering="crispEdges">
  <path d="M500.500 249v608M500 249.500h651" stroke="#1a1210" stroke-opacity=".55"/>
  <rect x="499.500" y="248.500" width="652" height="609" stroke="#f0f0f0"/>
  <path d="M717.500 249v608M934.500 249v608M500 451.500h651M500 654.500h651" stroke="#e6dfdc"/>
  <g fill="#f6f6f6" stroke="none" shape-rendering="auto">
    <path d="M498.500 246h22v4h-19.500v19.500h-4v-22a1.500 1.500 0 0 1 1.500-1.500z"/>
    <path d="M1152.500 246h-22v4h19.500v19.500h4v-22a1.500 1.500 0 0 0-1.500-1.500z"/>
    <path d="M498.500 860h22v-4h-19.500v-19.500h-4v22a1.500 1.500 0 0 0 1.500 1.500z"/>
    <path d="M1152.500 860h-22v-4h19.500v-19.500h4v22a1.500 1.500 0 0 1-1.500 1.500z"/>
    <path d="M803.500 246h44l2 2.200v1.800h-48v-1.800z"/>
    <path d="M803.500 860h44l2-2.200v-1.800h-48v1.800z"/>
    <path d="M497 532l2.200-2h1.800v45.500h-1.800l-2.200-2z"/>
    <path d="M1154 532l-2.200-2h-1.800v45.500h1.800l2.200-2z"/>
  </g>
</svg>
<!-- ===== Right dock ===== -->
<div class="a dk" style="left:1595px;top:63px;width:324px;height:11px"></div>
<svg style="left:1619px;top:66px" width="8" height="6" viewBox="0 0 8 6" fill="none" stroke="#e0e0e0" stroke-width="1.200"><path d="M3.500.5L1 3l2.500 2.500M7.500.5L5 3l2.500 2.500"/></svg>
<svg style="left:1905px;top:66px" width="8" height="6" viewBox="0 0 8 6" fill="none" stroke="#e0e0e0" stroke-width="1.200"><path d="M.5.5L3 3 .5 5.500M4.500.5L7 3 4.500 5.500"/></svg>
<!-- collapsed strip -->
<div class="a bg" style="left:1595px;top:75px;width:37px;height:68px"></div>
<div class="a bg" style="left:1595px;top:145px;width:37px;height:886px"></div>
<div class="a" style="left:1604px;top:78px;width:19px;height:4px;background:repeating-linear-gradient(90deg,#3e3e3e 0 1px,#535353 1px 2px)"></div>
<svg style="left:1606px;top:88px" width="17" height="19" viewBox="1606 88 17 19" fill="none" stroke="#dcdcdc" stroke-width="1.100"><rect x="1607.450" y="89.450" width="4.200" height="4.200"/><rect x="1607.450" y="95.550" width="4.200" height="4.200"/><rect x="1606.900" y="101" width="5.300" height="5" fill="#dcdcdc" stroke="none"/><path d="M1615.900 103.600c3.600-2 5.400-5.800 3.600-9.600" stroke-width="1.700"/><path d="M1614.600 91l6.900-1-2 6.200z" fill="#dcdcdc" stroke="none"/></svg>
<svg style="left:1607px;top:119px" width="14" height="14" viewBox="1607 119 14 14"><path d="M1608.300 119.200h11.200a1 1 0 0 1 1 1v6.900a1 1 0 0 1-1 1h-5.700l-3.600 3.900-.7-3.900h-1.200a1 1 0 0 1-1-1v-6.900a1 1 0 0 1 1-1z" fill="#d8d8d8"/></svg>

<!-- ===== Color panel ===== -->
<div class="a dk" style="left:1635px;top:75px;width:284px;height:28px"></div>
<div class="a bg" style="left:1635px;top:75px;width:42px;height:28px"></div>
<div class="a bg" style="left:1635px;top:103px;width:284px;height:289px"></div>
<div class="sep" style="left:1737px;top:75px;height:27px;background:#383838"></div>
<div class="sep" style="left:1800px;top:75px;height:27px;background:#383838"></div>
<div class="sep" style="left:1857px;top:75px;height:27px;background:#383838"></div>
<div class="t" style="left:1644px;top:81.64px;font-size:10px;color:#f4f4f4;font-weight:bold;transform:scaleX(0.9767)">Color</div>
<div class="t" style="left:1686px;top:81.64px;font-size:10px;color:#a8a8a8;font-weight:bold;transform:scaleX(0.9406)">Swatches</div>
<div class="t" style="left:1747.2px;top:81.64px;font-size:10px;color:#a8a8a8;font-weight:bold;transform:scaleX(0.9660)">Gradients</div>
<div class="t" style="left:1810px;top:81.64px;font-size:10px;color:#a8a8a8;font-weight:bold;transform:scaleX(0.9771)">Patterns</div>
<svg style="left:1903px;top:84px" width="10" height="8" viewBox="0 0 10 8" stroke="#d0d0d0" stroke-width="1"><path d="M0 .5h10M0 2.500h10M0 4.500h10M0 6.500h10"/></svg>
<div class="a" style="left:1654.500px;top:123.500px;width:19px;height:19px;background:#f4f4f4;border:1px solid #4a4a4a"></div>
<div class="a" style="left:1643px;top:112px;width:22px;height:22px;border:1px solid #8a8a8a"></div>
<div class="a" style="left:1644px;top:113px;width:20px;height:20px;background:#060202;border:1px solid #f4f4f4"></div>
<div class="a" style="left:1680px;top:110px;width:187px;height:261px;background:linear-gradient(180deg,rgba(0,0,0,0),#000),linear-gradient(90deg,#fff,#ff0d0d)"></div>
<svg style="left:1680px;top:364px" width="6" height="7" viewBox="0 0 6 7" fill="none" stroke="#fff" stroke-width="1"><path d="M0 1.500a3.500 3.500 0 0 1 3.500 3.500v2"/></svg>
<div class="a" style="left:1884px;top:110px;width:19px;height:261px;background:linear-gradient(180deg,#ff0d0d 0%,#ff0d0d 3%,#ff00a0 12%,#ff00ff 17%,#8000ff 25%,#0000ff 33%,#0080ff 42%,#00ffff 50%,#00ff80 58%,#00ff00 67%,#80ff00 75%,#ffff00 83%,#ff8000 91%,#ff0d0d 98%,#ff0d0d 100%)"></div>
<svg style="left:1874px;top:365px" width="9" height="10" viewBox="0 0 9 10"><path d="M.5 1.500a1 1 0 0 1 1-1h2L8.500 5 3.500 9.500h-2a1 1 0 0 1-1-1z" fill="#e0e0e0" stroke="#3a3a3a" stroke-width=".8"/></svg>
<!-- ===== Properties panel ===== -->
<div class="a dk" style="left:1635px;top:394px;width:284px;height:28px"></div>
<div class="a bg" style="left:1635px;top:394px;width:66px;height:28px"></div>
<div class="a bg" style="left:1635px;top:422px;width:284px;height:290px"></div>
<div class="sep" style="left:1777px;top:394px;height:27px;background:#383838"></div>
<div class="sep" style="left:1814px;top:394px;height:27px;background:#383838"></div>
<div class="t" style="left:1644px;top:401.54px;font-size:10px;color:#f4f4f4;font-weight:bold;transform:scaleX(0.9804)">Properties</div>
<div class="t" style="left:1710.1px;top:401.54px;font-size:10px;color:#a8a8a8;font-weight:bold;transform:scaleX(0.9775)">Adjustments</div>
<div class="t" style="left:1786.6px;top:400.56px;font-size:10.5px;color:#a8a8a8;transform:scaleX(1.0095)">库</div>
<svg style="left:1903px;top:404px" width="10" height="8" viewBox="0 0 10 8" stroke="#d0d0d0" stroke-width="1"><path d="M0 .5h10M0 2.500h10M0 4.500h10M0 6.500h10"/></svg>
<div class="a" style="left:1645px;top:428px;width:23px;height:23px;background:#2f2f2f;border:1px solid #444;border-radius:3px"></div>
<svg style="left:1650px;top:434px" width="14" height="11" viewBox="0 0 14 11"><rect x=".5" y=".5" width="13" height="10" fill="none" stroke="#e0e0e0"/><path d="M2 9l3-4 2 2 2-3.500 3 5.500z" fill="#e0e0e0"/><circle cx="4" cy="3.200" r="1" fill="#e0e0e0"/></svg>
<div class="t" style="left:1674px;top:435.44px;font-size:10px;color:#dedede;transform:scaleX(0.9380)">Pixel Layer</div>
<div class="dot" style="left:1635px;top:456px;width:284px"></div>
<!-- scrollbar -->
<div class="a" style="left:1903px;top:458px;width:16px;height:228px;background:#4b4b4b"></div>
<div class="a" style="left:1905px;top:476px;width:12px;height:126px;background:#6a6a6a"></div>
<svg style="left:1907px;top:465px" width="8" height="5" viewBox="0 0 8 5" fill="none" stroke="#8a8a8a" stroke-width="1.200"><path d="M.5 4.500l3.500-4 3.500 4"/></svg>
<svg style="left:1907px;top:674px" width="8" height="5" viewBox="0 0 8 5" fill="none" stroke="#8a8a8a" stroke-width="1.200"><path d="M.5.5l3.500 4 3.500-4"/></svg>
<!-- Transform -->
<svg style="left:1642px;top:469px" width="9" height="6" viewBox="0 0 9 6" fill="none" stroke="#c8c8c8" stroke-width="1.100"><path d="M.5.5l4 4.500 4-4.500"/></svg>
<div class="t" style="left:1658.6px;top:466.54px;font-size:10px;color:#f4f4f4;font-weight:bold;transform:scaleX(1.0162)">Transform</div>
<svg style="left:1652px;top:500px" width="8" height="17" viewBox="0 0 8 17" fill="none" stroke="#9a9a9a" stroke-width="1.400"><rect x="1" y="1" width="6" height="8" rx="3"/><rect x="1" y="8" width="6" height="8" rx="3"/><path d="M4 5v7" stroke-width="1.600"/></svg>
<div class="t" style="left:1679px;top:490.33px;font-size:10px;color:#8c8c8c;transform:scaleX(0.9838)">W</div>
<div class="inp" style="left:1694px;top:487.300px;width:49px;height:16.400px;background:#4b4b4b;border-color:#5f5f5f"></div>
<div class="t" style="left:1697.3px;top:490.33px;font-size:10px;color:#7a7a7a;transform:scaleX(0.9440)">2070 px</div>
<div class="t" style="left:1768.9px;top:490.33px;font-size:10px;color:#8c8c8c;transform:scaleX(0.9593)">X</div>
<div class="inp" style="left:1781px;top:487.300px;width:49px;height:16.400px;background:#4b4b4b;border-color:#5f5f5f"></div>
<div class="t" style="left:1783.9px;top:490.33px;font-size:10px;color:#7a7a7a;transform:scaleX(1.0050)">0 px</div>
<div class="t" style="left:1681.5px;top:515.33px;font-size:10px;color:#8c8c8c;transform:scaleX(0.8294)">H</div>
<div class="inp" style="left:1694px;top:512.400px;width:49px;height:16.300px;background:#4b4b4b;border-color:#5f5f5f"></div>
<div class="t" style="left:1697.3px;top:515.33px;font-size:10px;color:#7a7a7a;transform:scaleX(0.9440)">1380 px</div>
<div class="t" style="left:1768.9px;top:515.33px;font-size:10px;color:#8c8c8c;transform:scaleX(0.9143)">Y</div>
<div class="inp" style="left:1781px;top:512.400px;width:49px;height:16.300px;background:#4b4b4b;border-color:#5f5f5f"></div>
<div class="t" style="left:1783.9px;top:515.33px;font-size:10px;color:#7a7a7a;transform:scaleX(1.0050)">0 px</div>
<svg style="left:1676px;top:544px" width="14" height="11" viewBox="0 0 14 11" fill="none" stroke="#dcdcdc" stroke-width="1.300"><path d="M11 .8L.8 10h12.500"/><path d="M7.500 5.500a5 5 0 0 1 2 4.500" stroke-width="1.100"/></svg>
<div class="inp" style="left:1694px;top:541.400px;width:49.500px;height:16.300px;background:#4b4b4b;border-color:#5f5f5f"></div>
<div class="sep" style="left:1728px;top:542.400px;height:14.300px;background:#5f5f5f"></div>
<div class="t" style="left:1697.3px;top:544.23px;font-size:10px;color:#7a7a7a;transform:scaleX(0.9672)">0.00°</div>
<svg style="left:1731px;top:548px" width="8" height="5" viewBox="0 0 8 5" fill="none" stroke="#666" stroke-width="1.100"><path d="M.5.5l3.500 3.500L7.500.5"/></svg>
<svg style="left:1781px;top:543px" width="17" height="14" viewBox="0 0 17 14"><path d="M1 2l5 5-5 5z" fill="none" stroke="#9a9a9a" stroke-width="1"/><path d="M16 2l-5 5 5 5z" fill="#9a9a9a"/><path d="M8.500 0v14" stroke="#9a9a9a" stroke-dasharray="1 1"/></svg>
<svg style="left:1811px;top:542px" width="14" height="16" viewBox="0 0 14 16"><path d="M2.500 1l4.500 4.500L11.500 1z" fill="none" stroke="#9a9a9a" stroke-width="1"/><path d="M2.500 15l4.500-5 4.500 5z" fill="#a8a8a8"/><path d="M0 8h14" stroke="#9a9a9a" stroke-dasharray="1 1"/></svg>
<div class="dot" style="left:1635px;top:573px;width:268px"></div>
<!-- Align -->
<svg style="left:1642px;top:586px" width="9" height="6" viewBox="0 0 9 6" fill="none" stroke="#c8c8c8" stroke-width="1.100"><path d="M.5.5l4 4.500 4-4.500"/></svg>
<div class="t" style="left:1660.1px;top:583.43px;font-size:10px;color:#f4f4f4;font-weight:bold;transform:scaleX(1.0305)">Align and Distribute</div>
<div class="t" style="left:1644px;top:604.43px;font-size:10px;color:#dedede;transform:scaleX(1.0074)">Align:</div>
<svg style="left:1649px;top:630px" width="180" height="16" viewBox="0 0 180 16" fill="#9c9c9c">
  <rect x="0" y="0" width="1.200" height="16"/><rect x="2.500" y="3" width="7" height="4"/><rect x="2.500" y="9" width="11" height="4"/>
  <rect x="35.400" y="0" width="1.200" height="16"/><rect x="32.500" y="3" width="7" height="4"/><rect x="30.500" y="9" width="11" height="4"/>
  <rect x="69.800" y="0" width="1.200" height="16"/><rect x="61.500" y="3" width="7" height="4"/><rect x="57.500" y="9" width="11" height="4"/>
  <rect x="104" y="1" width="15" height="1.200"/><rect x="106.500" y="3.500" width="4" height="11"/><rect x="112.500" y="3.500" width="4" height="7"/>
  <rect x="132" y="8" width="15" height="1.200"/><rect x="135" y="3" width="4" height="11"/><rect x="141" y="5" width="4" height="7"/>
  <rect x="161" y="14.500" width="15" height="1.200"/><rect x="163.500" y="2" width="4" height="11"/><rect x="169.500" y="6" width="4" height="7"/>
</svg>
<svg style="left:1813px;top:666px" width="14" height="4" viewBox="0 0 14 4" fill="#e0e0e0"><circle cx="2" cy="2" r="1.400"/><circle cx="7" cy="2" r="1.400"/><circle cx="12" cy="2" r="1.400"/></svg>
<div class="dot" style="left:1635px;top:682px;width:268px"></div>
<!-- ===== Layers panel ===== -->
<div class="a dk" style="left:1635px;top:715px;width:284px;height:28px"></div>
<div class="a bg" style="left:1635px;top:715px;width:47px;height:28px"></div>
<div class="a bg" style="left:1635px;top:743px;width:284px;height:288px"></div>
<div class="sep" style="left:1741px;top:715px;height:27px;background:#383838"></div>
<div class="sep" style="left:1785px;top:715px;height:27px;background:#383838"></div>
<div class="t" style="left:1644px;top:721.53px;font-size:10px;color:#f4f4f4;font-weight:bold;transform:scaleX(0.9209)">Layers</div>
<div class="t" style="left:1691px;top:721.53px;font-size:10px;color:#a8a8a8;font-weight:bold;transform:scaleX(0.9441)">Channels</div>
<div class="t" style="left:1751px;top:721.53px;font-size:10px;color:#a8a8a8;font-weight:bold;transform:scaleX(0.9326)">Paths</div>
<svg style="left:1903px;top:724px" width="10" height="8" viewBox="0 0 10 8" stroke="#d0d0d0" stroke-width="1"><path d="M0 .5h10M0 2.500h10M0 4.500h10M0 6.500h10"/></svg>
<!-- filter row -->
<div class="inp" style="left:1639px;top:751.400px;width:86.600px;height:20px;background:#4b4b4b;border-color:#5c5c5c;border-radius:3px"></div>
<svg style="left:1646px;top:756px" width="11" height="11" viewBox="0 0 11 11" fill="none" stroke="#e0e0e0" stroke-width="1.500"><circle cx="4.200" cy="4.200" r="3.300"/><path d="M6.700 6.700l3.500 3.500"/></svg>
<div class="t" style="left:1661.3px;top:756.43px;font-size:10px;color:#828282;transform:scaleX(0.9343)">Kind</div>
<svg style="left:1714px;top:760px" width="7" height="4" viewBox="0 0 7 4" fill="none" stroke="#666" stroke-width="1"><path d="M.5.500l3 3 3-3"/></svg>
<svg style="left:1736px;top:755px" width="132" height="16" viewBox="0 0 132 16" fill="none" stroke="#e0e0e0" stroke-width="1.200">
  <rect x="1" y="1.500" width="11.500" height="9"/><path d="M3 9l2.500-3 1.500 1.500 2-2.500 2 4z" fill="#e0e0e0" stroke="none"/>
  <circle cx="31" cy="6.500" r="5"/><path d="M34.600 3a5 5 0 0 1-7.200 7z" fill="#e0e0e0" stroke="none"/>
  <path d="M50.600 5.200V2h10.300v3.200h-1.100l-.4-1.900h-2.400v6.500l1.400.3V11h-5.300v-.9l1.400-.3V3.300h-2.400l-.4 1.900z" fill="#e0e0e0" stroke="none"/>
  <rect x="76" y="2" width="9" height="9"/><g fill="#e0e0e0" stroke="none"><rect x="74.500" y=".5" width="3" height="3"/><rect x="83.500" y=".5" width="3" height="3"/><rect x="74.500" y="9.500" width="3" height="3"/><rect x="83.500" y="9.500" width="3" height="3"/></g>
  <path d="M102.500 1h4.500l3 3v7.500h-3" /><path d="M107 1v3h3"/><rect x="99.500" y="6" width="5.500" height="6" fill="#e0e0e0" stroke="none"/>
</svg>
<div class="a" style="left:1857px;top:753px;width:10px;height:18px;border:1px solid #444;border-radius:5px;background:#4a4a4a"></div>
<div class="a" style="left:1857.500px;top:752.500px;width:9px;height:9px;border-radius:5px;background:#e4e4e4"></div>
<div class="dot" style="left:1635px;top:775px;width:284px"></div>
<!-- blend row -->
<div class="inp" style="left:1639px;top:779.600px;width:132.600px;height:19.600px;background:#4b4b4b;border-color:#5c5c5c;border-radius:3px"></div>
<div class="t" style="left:1647.3px;top:783.23px;font-size:10px;color:#828282;transform:scaleX(0.9586)">Normal</div>
<svg style="left:1760px;top:788px" width="7" height="4" viewBox="0 0 7 4" fill="none" stroke="#666" stroke-width="1"><path d="M.5.500l3 3 3-3"/></svg>
<div class="t" style="left:1778.3px;top:783.23px;font-size:10px;color:#e2e2e2;transform:scaleX(0.9731)">Opacity:</div>
<div class="inp" style="left:1818.600px;top:780.500px;width:47px;height:16.200px;background:#4b4b4b;border-color:#5c5c5c"></div>
<div class="sep" style="left:1850px;top:781.500px;height:14.200px;background:#5c5c5c"></div>
<div class="t" style="left:1822.8px;top:783.23px;font-size:10px;color:#787878;transform:scaleX(0.9422)">100%</div>
<svg style="left:1854px;top:787px" width="8" height="5" viewBox="0 0 8 5" fill="none" stroke="#c8c8c8" stroke-width="1.100"><path d="M.5.5l3.500 3.500L7.500.5"/></svg>
<div class="dot" style="left:1635px;top:803px;width:284px"></div>
<!-- lock row -->
<div class="t" style="left:1641.3px;top:811.43px;font-size:10px;color:#e2e2e2;transform:scaleX(0.9454)">Lock:</div>
<svg style="left:1674px;top:810px" width="102" height="15" viewBox="0 0 102 15" fill="none" stroke="#e0e0e0" stroke-width="1.200">
  <rect x=".5" y="1.500" width="10" height="10" stroke-width="1"/><g fill="#e0e0e0" stroke="none"><rect x="1" y="2" width="3" height="3"/><rect x="7" y="2" width="3" height="3"/><rect x="4" y="5" width="3" height="3"/><rect x="1" y="8" width="3" height="3"/><rect x="7" y="8" width="3" height="3"/></g>
  <path d="M33.500 1l-6 7 1.800 1.300z" fill="#e0e0e0" stroke="none"/><path d="M26.800 8.800c-1.700-.3-2.800.8-2.800 2 0 .8-.8 1.300-1.600 1.300 1.600 1.200 4.500.8 5.300-1.300.3-.8-.1-1.600-.9-2z" fill="#e0e0e0" stroke="none"/>
  <path d="M49.500 1v11M44 6.500h11" stroke-width="1.200"/><path d="M49.500 0l2.300 2.800h-4.600zM49.500 13l2.300-2.800h-4.600zM43 6.500l2.800-2.300v4.600zM56 6.500l-2.800-2.300v4.600z" fill="#e0e0e0" stroke="none"/>
  <path d="M68 1v10h11M65 4h11v10" stroke-width="1.200"/><path d="M70.500 1.500h6.500v1M78.500 5.500v4" stroke-dasharray="1.500 1" stroke-width="1"/>
  <rect x="89.500" y="6" width="9" height="7" rx="1" fill="#e0e0e0" stroke="none"/><path d="M91.500 6v-2a2.500 2.500 0 0 1 5 0v2" stroke-width="1.400"/>
</svg>
<div class="t" style="left:1800.2px;top:811.43px;font-size:10px;color:#e2e2e2;transform:scaleX(0.8867)">Fill:</div>
<div class="inp" style="left:1818.600px;top:808.600px;width:47px;height:16.200px;background:#4b4b4b;border-color:#5c5c5c"></div>
<div class="sep" style="left:1850px;top:809.600px;height:14.200px;background:#5c5c5c"></div>
<div class="t" style="left:1822.8px;top:811.43px;font-size:10px;color:#787878;transform:scaleX(0.9422)">100%</div>
<svg style="left:1854px;top:815px" width="8" height="5" viewBox="0 0 8 5" fill="none" stroke="#c8c8c8" stroke-width="1.100"><path d="M.5.5l3.500 3.500L7.500.5"/></svg>
<!-- layer list -->
<div class="a" style="left:1635px;top:833px;width:284px;height:173px;background:#4b4b4b"></div>
<div class="a bg" style="left:1635px;top:833px;width:268px;height:61px"></div>
<div class="a" style="left:1665px;top:833px;width:238px;height:29px;background:#6b6b6b"></div>
<div class="a" style="left:1635px;top:862px;width:268px;height:1px;background:#434343"></div>
<div class="a" style="left:1635px;top:893px;width:268px;height:1px;background:#434343"></div>
<div class="a" style="left:1664px;top:833px;width:1px;height:61px;background:#434343"></div>
<svg style="left:1643.500px;top:845px" width="14" height="9" viewBox="0 0 14 9"><path d="M0 4.500C2 1.500 4.500 0 7 0s5 1.500 7 4.500C12 7.500 9.500 9 7 9S2 7.500 0 4.500z" fill="#e0e0e0"/><circle cx="7" cy="4.500" r="2.600" fill="#535353"/><circle cx="7" cy="4.500" r="1.300" fill="#e0e0e0"/></svg>
<svg style="left:1643.500px;top:876px" width="14" height="9" viewBox="0 0 14 9"><path d="M0 4.500C2 1.500 4.500 0 7 0s5 1.500 7 4.500C12 7.500 9.500 9 7 9S2 7.500 0 4.500z" fill="#e0e0e0"/><circle cx="7" cy="4.500" r="2.600" fill="#535353"/><circle cx="7" cy="4.500" r="1.300" fill="#e0e0e0"/></svg>
<!-- thumb 1 -->
<div class="a" style="left:1669.500px;top:838.500px;width:31px;height:20.500px;background:linear-gradient(180deg,#fdc47c 0,#ffa42c 27%,#e87420 33%,#8a5038 38%,#3a2220 46%,#1a0808 60%,#140606 100%)"></div>
<svg style="left:1667px;top:835px" width="37" height="26" viewBox="0 0 37 26" fill="none" stroke="#f4f4f4" stroke-width="1.200"><path d="M.6 6.500V.8h11M25 .8h11.400v5.700M36.400 20v5.200H25M12 25.200H.6V20"/></svg>
<div class="t" style="left:1709.8px;top:842.53px;font-size:10px;color:#f2f2f2;transform:scaleX(0.9745)">Crop Preview</div>
<!-- thumb 2 -->
<div class="a" style="left:1677px;top:872px;width:16px;height:15px;background:#f4f4f4"></div>
<div class="a" style="left:1677px;top:888px;width:16px;height:1px;background:#e0e0e0"></div>
<div class="t" style="left:1709.8px;top:873.43px;font-size:10px;color:#f2f2f2;transform:scaleX(1.0080)">Background</div>
<!-- bottom bar -->
<div class="dot" style="left:1635px;top:1006px;width:284px"></div>
<svg style="left:1716px;top:1010px" width="180" height="20" viewBox="1716 1010 180 20" fill="none" stroke="#e2e2e2" stroke-width="1.300">
  <g stroke="#8c8c8c" stroke-width="1.400"><rect x="1717.700" y="1015.500" width="7.600" height="6" rx="3"/><rect x="1722.700" y="1015.500" width="7.600" height="6" rx="3"/></g>
  <path d="M1756.200 1025h3.200l-1.600 2z" fill="#e2e2e2" stroke="none"/>
  <rect x="1770.800" y="1013" width="13.200" height="9.500" fill="#e2e2e2" stroke="none"/><circle cx="1777.400" cy="1017.700" r="2.900" fill="#535353" stroke="none"/>
  <circle cx="1805.500" cy="1018.400" r="5"/><path d="M1809.200 1014.800a5.100 5.100 0 0 1-7.300 7.200z" fill="#e2e2e2" stroke="none"/><path d="M1810 1025h3.200l-1.600 2z" fill="#e2e2e2" stroke="none"/>
  <path d="M1825.800 1013.300h4.600l1.200 1.700h6.700v7.500h-12.500z" fill="#e2e2e2" stroke="none"/>
  <rect x="1854.200" y="1013.300" width="10.200" height="10.200" stroke-width="1.200"/><path d="M1859.300 1015.700v5.400M1856.600 1018.400h5.400" stroke-width="1.200"/>
  <path d="M1880.300 1015h10.500M1883.500 1014.700v-1.400h4v1.400M1881.700 1015.500l.6 8.700h6.400l.6-8.700M1884 1017v5.400M1885.550 1017v5.400M1887.100 1017v5.400" stroke-width="1.100"/>
</svg>
<div class="t" style="left:1745.7px;top:1010.13px;font-size:15.5px;color:#e2e2e2;font-style:italic;transform:scaleX(0.9617)">fx</div>
</body>
</html>
